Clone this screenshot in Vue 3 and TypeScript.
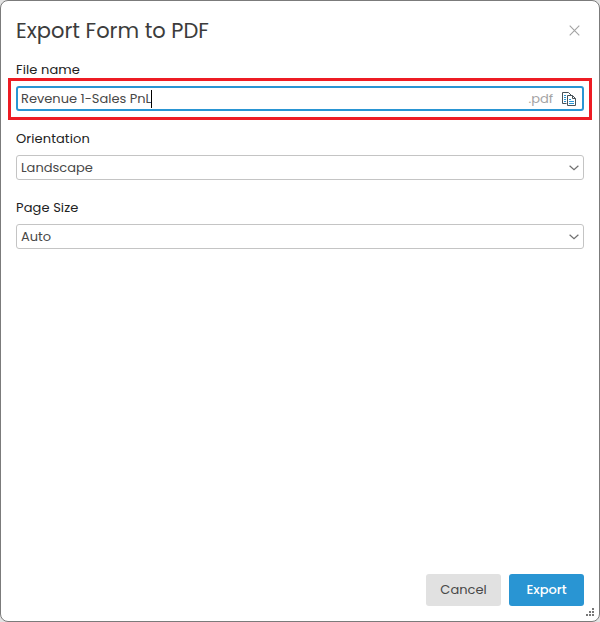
<script setup lang="ts">
import { ref } from 'vue'

interface SelectField {
  id: string
  label: string
  value: string
}

const fileName = ref('Revenue 1-Sales PnL')
const selects = ref<SelectField[]>([
  { id: 'orientation', label: 'Orientation', value: 'Landscape' },
  { id: 'page-size', label: 'Page Size', value: 'Auto' },
])
const gripDots = [[6, 0], [3, 3], [6, 3], [0, 6], [3, 6], [6, 6]]
</script>

<template>
  <main class="dialog">
    <header class="header">
      <h1 class="title">Export Form to PDF</h1>
      <button class="close" aria-label="Close">
        <svg width="11" height="11" viewBox="0 0 11 11">
          <path d="M.7.7l9.6 9.6M10.3.7L.7 10.3" fill="none" stroke="#a3a3a3" stroke-width="1.1" />
        </svg>
      </button>
    </header>

    <section class="field">
      <div class="label">File name</div>
      <div class="highlight">
        <div class="input">
          <span class="value">{{ fileName }}</span>
          <i class="caret"></i>
          <span class="suffix">.pdf</span>
          <svg class="copy" width="15" height="15" viewBox="0 0 15 15" fill="none">
            <path d="M4.5 11.5H.5V.5H6.5L9 3" stroke="#465158" />
            <path d="M2 3.5h2M2 5.5h2M2 7.5h2M2 9.5h2" stroke="#2995d3" />
            <path d="M5.5 3.5h5l3 3v7h-8zM10.5 3.5v3h3" stroke="#465158" />
            <path d="M7 7.5h2M7 9.5h5M7 11.5h5" stroke="#2995d3" />
          </svg>
        </div>
      </div>
    </section>

    <section v-for="field in selects" :key="field.id" class="field">
      <div class="label">{{ field.label }}</div>
      <div class="select">
        <span class="value">{{ field.value }}</span>
        <svg width="10" height="6" viewBox="0 0 10 6">
          <path d="M.6.7L5 4.8 9.4.7" fill="none" stroke="#707070" stroke-width="1.2" />
        </svg>
      </div>
    </section>

    <footer class="footer">
      <button class="button cancel">Cancel</button>
      <button class="button export">Export</button>
    </footer>
    <svg class="grip" width="8" height="8" viewBox="0 0 8 8" fill="#777">
      <rect v-for="([x, y], i) in gripDots" :key="i" :x="x" :y="y" width="2" height="2" />
    </svg>
  </main>
</template>

<style>
body {
  background: #e3e3e3;
}
</style>

<style scoped>
.dialog {
  box-sizing: border-box;
  position: relative;
  display: flex;
  flex-direction: column;
  width: 600px;
  height: 622px;
  padding: 0 15px 15px;
  border: 1px solid #7b7b7b;
  border-radius: 8px;
  background: #fff;
  color: #484848;
  font-family: Poppins, Inter, sans-serif;
  font-size: 13px;
}
.header {
  display: flex;
  align-items: center;
  justify-content: space-between;
  height: 59px;
  padding-right: 4px;
}
.title {
  margin: 0;
  color: #3c3c3c;
  font-size: 21px;
  font-weight: 400;
  line-height: 30px;
}
.close {
  display: flex;
  padding: 0;
  border: 0;
  background: none;
}
.field {
  height: 69px;
}
.label {
  height: 26px;
  color: #222;
  font-weight: 400;
  letter-spacing: 0.1px;
  line-height: 19px;
}
.highlight {
  margin: -8px -8px 0;
  padding: 5px 5px 6px;
  border: 3px solid #ed1c24;
}
.input,
.select {
  box-sizing: border-box;
  display: flex;
  align-items: center;
  height: 25px;
  border-radius: 3px;
}
.input {
  padding: 0 5px 0 3px;
  border: 2px solid #2995d3;
}
.select {
  justify-content: space-between;
  padding: 0 4px;
  border: 1px solid #c4c4c4;
}
.caret {
  width: 1px;
  height: 18px;
  background: #000;
}
.suffix {
  margin-left: auto;
  color: #a3a3a3;
}
.copy {
  margin: 2px 0 0 9px;
}
.footer {
  display: flex;
  justify-content: flex-end;
  gap: 8px;
  margin-top: auto;
}
.button {
  width: 75px;
  height: 32px;
  padding: 0;
  border: 0;
  border-radius: 3px;
  font: inherit;
}
.cancel {
  background: #e1e1e1;
  color: #484848;
}
.export {
  background: #2995d3;
  color: #fff;
  font-weight: 500;
}
.grip {
  position: absolute;
  right: 5px;
  bottom: 5px;
}
</style>
